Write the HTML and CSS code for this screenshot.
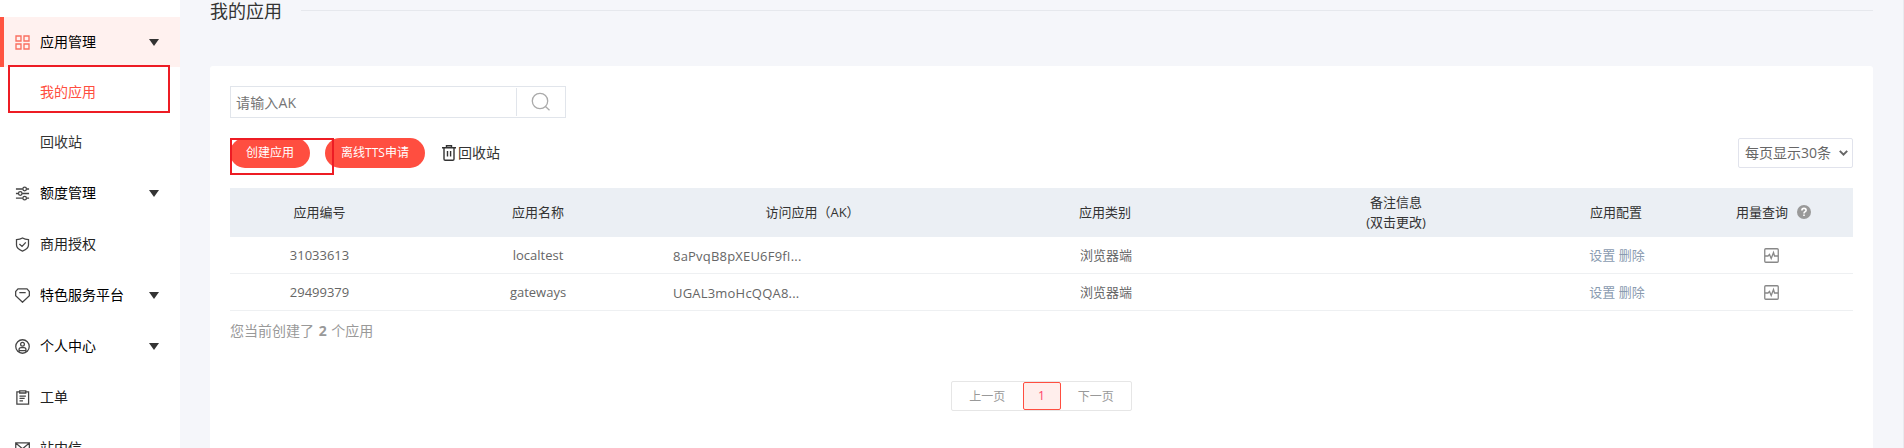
FILE: index.html
```html
<!DOCTYPE html>
<html lang="zh-CN">
<head>
<meta charset="utf-8">
<title>我的应用</title>
<link rel="stylesheet" href="styles.css">
</head>
<body>
<div class="page">
  <nav class="sidebar">
    <div class="nav-item active">
      <svg class="nav-icon" viewBox="0 0 15 15"><path d="M1 1h5v5H1zM9 1h5v5H9zM1 9h5v5H1zM9 9h5v5H9z"/></svg>
      <span class="nav-label">应用管理</span><i class="caret"></i>
    </div>
    <div class="sub-item current">我的应用</div>
    <div class="sub-item">回收站</div>
    <div class="nav-item">
      <svg class="nav-icon" viewBox="0 0 16 16"><path d="M1 3.2h7.3M12.3 3.2H15M1 8h2.6M7.6 8H15M1 13h7.3M12.3 13H15"/><circle cx="10.3" cy="3.2" r="1.9"/><circle cx="5.6" cy="8" r="1.9"/><circle cx="10.3" cy="13" r="1.9"/></svg>
      <span class="nav-label">额度管理</span><i class="caret"></i>
    </div>
    <div class="nav-item plain">
      <svg class="nav-icon" viewBox="0 0 16 16"><path d="M8 1c2 1.3 4.200 1.700 6.400 1.700v5.800c0 3.200-3 5.200-6.400 6.500-3.400-1.300-6.400-3.300-6.400-6.500V2.700C3.800 2.700 6 2.300 8 1zM4.700 7.500l2.800 2.500 4-4.200"/></svg>
      <span class="nav-label">商用授权</span>
    </div>
    <div class="nav-item">
      <svg class="nav-icon" viewBox="0 0 16 16"><path d="M3.200 1h9.600L15.300 3.800v4.400L8 15.200.7 8.200V3.800zM4.600 5h6.800"/></svg>
      <span class="nav-label">特色服务平台</span><i class="caret"></i>
    </div>
    <div class="nav-item">
      <svg class="nav-icon" viewBox="0 0 16 16"><circle cx="8" cy="8" r="7.200"/><circle cx="8" cy="5.500" r="2"/><path d="M4.300 13.800v-2.300q0-2.200 2.200-2.200h3q2.200 0 2.200 2.200v2.300M4.300 12.500h7.400"/></svg>
      <span class="nav-label">个人中心</span><i class="caret"></i>
    </div>
    <div class="nav-item plain">
      <svg class="nav-icon" viewBox="0 0 16 16"><path d="M5 2H2v13h12.500V2h-3M5 1h6.500v2.200H5zM4.800 6.500h6.800M4.800 9h5.500M4.800 11.500h3.700"/></svg>
      <span class="nav-label">工单</span>
    </div>
    <div class="nav-item plain">
      <svg class="nav-icon" viewBox="0 0 16 16"><path d="M.8 2h14.500v12H.8zM1 2.300l7 6 7-6"/></svg>
      <span class="nav-label">站内信</span>
    </div>
    <div class="mark mark-menu"></div>
  </nav>
  <main class="main">
    <header class="title-row"><h1 class="title">我的应用</h1><span class="title-line"></span></header>
    <section class="card">
      <div class="search">
        <span class="search-input">请输入AK</span>
        <span class="search-btn"><svg width="20" height="20" viewBox="0 0 20 20"><circle cx="9" cy="9" r="7.700"/><path d="M14.500 14.500l4 3.800"/></svg></span>
      </div>
      <div class="toolbar">
        <span class="btn create">创建应用<span class="mark mark-create"></span></span>
        <span class="btn tts">离线TTS申请</span>
        <span class="trash"><svg width="14" height="16" viewBox="0 0 14 16"><path d="M0 2.700h14M4.500 2V.8h5V2M2 3v11q0 1.200 1.200 1.200h7.600q1.200 0 1.200-1.200V3M5.500 6v5.500M8.600 6v5.500"/></svg>回收站</span>
        <span class="page-size">每页显示30条<svg width="9" height="6" viewBox="0 0 9 6"><path d="M.8 .9l3.700 3.700L8.200 .9"/></svg></span>
      </div>
      <div class="table">
        <div class="row head">
          <span>应用编号</span><span>应用名称</span><span>访问应用（AK）</span><span>应用类别</span><span>备注信息<br>(双击更改)</span><span>应用配置</span>
          <span class="usage">用量查询<svg width="14" height="14" viewBox="0 0 14 14"><circle cx="7" cy="7" r="7"/><path d="M4.900 5.400q0-2 2.100-2t2.100 1.800q0 1-1.100 1.600Q7 7.300 7 8.400M7 9.600v1.500"/></svg></span>
        </div>
        <div class="row">
          <span>31033613</span><span>localtest</span><span class="ak">8aPvqB8pXEU6F9fI...</span><span class="kind">浏览器端</span><span></span><span class="ops"><a>设置</a> <a>删除</a></span>
          <span><svg class="chart" viewBox="0 0 15 15"><rect x=".75" y=".75" width="13.500" height="13.500" rx="1"/><path d="M1 8h3l1.500-1.500L7.200 10.500 9.500 4.500l1 3.500h3.500"/></svg></span>
        </div>
        <div class="row">
          <span>29499379</span><span>gateways</span><span class="ak">UGAL3moHcQQA8...</span><span class="kind">浏览器端</span><span></span><span class="ops"><a>设置</a> <a>删除</a></span>
          <span><svg class="chart" viewBox="0 0 15 15"><rect x=".75" y=".75" width="13.500" height="13.500" rx="1"/><path d="M1 8h3l1.500-1.500L7.200 10.500 9.500 4.500l1 3.500h3.500"/></svg></span>
        </div>
      </div>
      <p class="summary">您当前创建了 <b>2</b> 个应用</p>
      <div class="pager"><span class="step">上一页</span><span class="num">1</span><span class="step">下一页</span></div>
    </section>
  </main>
</div>
</body>
</html>
```
FILE: styles.css
```css
* { box-sizing: border-box; }
body {
  margin: 0;
  height: 448px;
  overflow: hidden;
  background: #f5f6fa;
  color: #333;
  font: 14px/20px "Open Sans", "Noto Sans CJK SC", sans-serif;
}
svg { fill: none; stroke: currentColor; flex: none; }
.page { display: flex; height: 448px; border-right: 1px solid #e9eaef; }

.sidebar { position: relative; width: 180px; flex: none; padding-top: 17px; background: #fff; overflow: hidden; }
.nav-item { display: flex; align-items: center; height: 50px; margin-bottom: 1px; padding: 0 21px 0 15px; color: #000; }
.nav-item.active { margin-bottom: 0; padding-left: 11px; border-left: 4px solid #ff5441; background: #fff1ef; }
.nav-icon { width: 15px; height: 15px; margin-right: 10px; color: #444; stroke-width: 1.35; }
.active .nav-icon { color: #fa6f60; }
.nav-label { flex: 1; }
.plain .nav-label { color: #222; }
.caret { border: 5px solid transparent; border-top: 7px solid #333; border-bottom: 0; }
.sub-item { height: 50px; padding-left: 40px; line-height: 50px; }
.sub-item + .sub-item { margin-bottom: 1px; }
.sub-item.current { color: #ff4e40; }

.mark { position: absolute; border: 2px solid #ed1c24; }
.mark-menu { left: 8px; top: 65px; width: 162px; height: 48px; }
.mark-create { left: 0; top: 0; width: 104px; height: 37px; z-index: 2; }

.main { flex: 1; padding: 0 30px; }
.title-row { display: flex; align-items: flex-start; height: 66px; }
.title { margin: 0 19px 0 0; font-size: 18px; font-weight: 400; line-height: 22px; }
.title-line { flex: 1; height: 1px; margin-top: 10px; background: #e6e8ed; }
.card { height: 400px; padding: 20px; background: #fff; border-radius: 3px; }

.search { display: flex; width: 336px; height: 32px; border: 1px solid #e1e5eb; line-height: 31px; }
.search-input { flex: 1; padding-left: 5px; color: #757575; letter-spacing: .15px; }
.search-btn { display: flex; align-items: center; justify-content: center; width: 49px; margin: 1px 0; border-left: 1px solid #e1e5eb; color: #aaa; }
.search-btn svg { stroke-width: 1.3; }

.toolbar { display: flex; align-items: center; height: 30px; margin: 20px 0; }
.btn { position: relative; height: 30px; border-radius: 15px; background: #ff4e40; color: #fff; font-size: 12px; line-height: 30px; text-align: center; }
.create { width: 80px; margin-right: 15px; }
.tts { width: 100px; margin-right: 17px; }
.trash { display: flex; align-items: center; gap: 2px; }
.trash svg { stroke-width: 1.4; }
.page-size { display: flex; align-items: center; justify-content: space-between; width: 115px; height: 30px; margin-left: auto; padding: 0 4px 0 6px; border: 1px solid #e1e3ec; border-radius: 2px; color: #666; white-space: nowrap; }
.page-size svg { stroke-width: 2; }

.row { display: grid; grid-template-columns: 179px 258px 291px 294px 288px 152px 161px; height: 37px; align-items: center; border-bottom: 1px solid #eef0f2; color: #666; font-size: 13px; text-align: center; }
.head { height: 49px; padding-bottom: 2px; border: 0; background: #ebeff4; color: #333; }
.usage { display: flex; align-items: center; justify-content: center; gap: 9px; padding-left: 2px; }
.usage svg { fill: #999; stroke: none; }
.usage path { fill: none; stroke: #fff; stroke-width: 1.6; }
.ak { padding: 2px 0 0 6px; text-align: left; letter-spacing: .2px; }
.kind { padding-left: 2px; }
.ops { padding-left: 2px; color: #8a9bb0; }
.chart { display: block; width: 15px; height: 15px; margin: 0 auto; color: #888; stroke-width: 1.3; transform: translateX(-1px); }
.summary { margin: 10px 0 40px; color: #999; }
.summary b { margin: 0 1px; }
.pager { display: flex; width: 181px; height: 30px; margin-left: 721px; border: 1px solid #e6e6e6; border-radius: 2px; color: #999; font-size: 12px; line-height: 29px; text-align: center; }
.step { flex: 1; }
.num { width: 38px; height: 28px; border: 1px solid #ff4e40; border-radius: 2px; background: #ffeeec; color: #ff4369; line-height: 26px; }
```
